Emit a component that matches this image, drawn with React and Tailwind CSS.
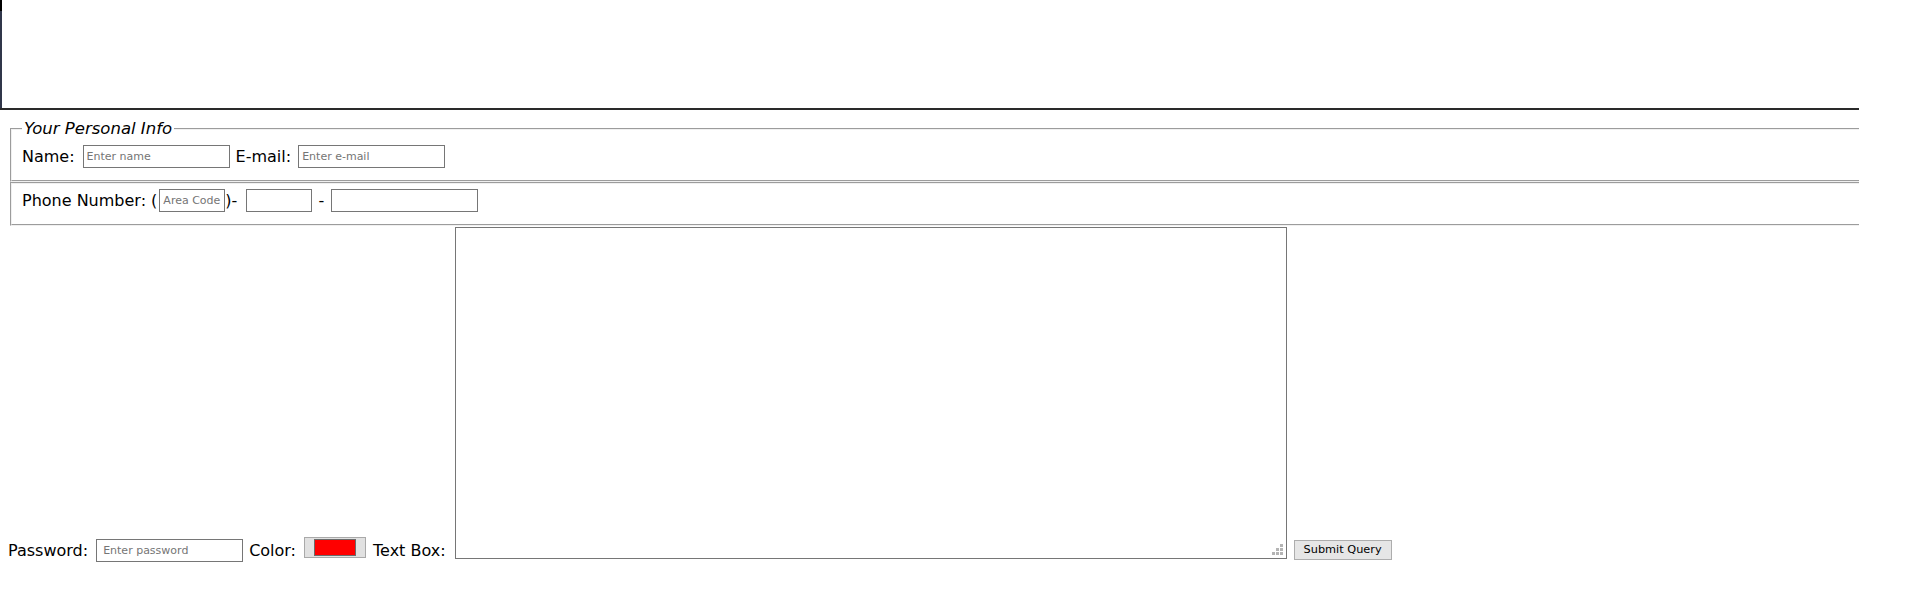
export default function App() {
  const inputBase =
    "h-[23px] border border-[#767676] bg-white px-[3px] text-[11px] text-black outline-none placeholder:text-[#757575] font-['DejaVu_Sans',sans-serif]";
  return (
    <div className="w-[1859px] h-[616px] overflow-hidden bg-white font-['DejaVu_Sans',sans-serif] text-black">
      <div className="flex h-[110px] w-full border-b-2 border-[#2a2a2a]">
        <div className="flex w-[2px] flex-col">
          <div className="h-[11px] bg-black" />
          <div className="flex-1 bg-[#30364a]" />
        </div>
      </div>

      <fieldset className="ml-[10px] mt-[9px] w-[1900px] border-2 border-[#f0f0f0] [border-style:groove] px-[10px] pt-[6px] pb-[12px]">
        <legend className="px-[2px] text-[16.5px] italic leading-[20px]">Your Personal Info</legend>
        <div className="flex h-[23px] items-center">
          <span className="text-[16px] leading-[19px]">Name:</span>
          <input className={`${inputBase} ml-[8px] w-[147px]`} placeholder="Enter name" />
          <span className="ml-[6px] text-[16px] leading-[19px]">E-mail:</span>
          <input className={`${inputBase} ml-[7px] w-[147px]`} placeholder="Enter e-mail" />
        </div>
      </fieldset>

      <fieldset className="ml-[10px] w-[1900px] border-2 border-[#f0f0f0] [border-style:groove] px-[10px] pt-[5px] pb-[12px]">
        <div className="flex h-[23px] items-center">
          <span className="whitespace-pre text-[16px] leading-[19px]">Phone Number: (</span>
          <input className={`${inputBase} ml-[2px] w-[66px]`} placeholder="Area Code" />
          <span className="text-[16px] leading-[19px]">)-</span>
          <input className={`${inputBase} ml-[9px] w-[66px]`} />
          <span className="ml-[6px] mr-[7px] text-[16px] leading-[19px]">-</span>
          <input className={`${inputBase} w-[147px]`} />
        </div>
      </fieldset>

      <div className="flex items-end pl-[8px] pt-[1px]">
        <span className="mb-[-1px] text-[16px] leading-[19px]">Password:</span>
        <input
          type="password"
          className={`${inputBase} mb-[-3px] ml-[8px] w-[147px] pl-[6px] text-[11.5px]`}
          placeholder="Enter password"
        />
        <span className="mb-[-1px] ml-[6px] text-[16px] leading-[19px]">Color:</span>
        <div className="mb-[1px] ml-[8px] flex h-[21px] w-[62px] items-center justify-center border border-[#a9a9a9] bg-[#e1e1e1]">
          <div className="h-[17px] w-[42px] border border-[#6b6b6b] bg-[#ff0000]" />
        </div>
        <span className="mb-[-1px] ml-[7px] text-[16px] leading-[19px]">Text Box:</span>
        <div className="relative ml-[9px] h-[332px] w-[832px]">
          <textarea className="block h-full w-full resize-none border border-[#767676] bg-white outline-none" />
          <svg
            className="absolute bottom-[4px] right-[4px]"
            width="11"
            height="11"
            viewBox="0 0 11 11"
          >
            <rect x="8" y="0" width="3" height="3" fill="#b4b4b4" />
            <rect x="4" y="4" width="3" height="3" fill="#b4b4b4" />
            <rect x="8" y="4" width="3" height="3" fill="#b4b4b4" />
            <rect x="0" y="8" width="3" height="3" fill="#b4b4b4" />
            <rect x="4" y="8" width="3" height="3" fill="#b4b4b4" />
            <rect x="8" y="8" width="3" height="3" fill="#b4b4b4" />
          </svg>
        </div>
        <button className="mb-[-1px] ml-[7px] h-[20px] w-[98px] border border-[#adadad] bg-[#e6e6e6] text-[11.3px] leading-[18px] text-black font-['DejaVu_Sans',sans-serif]">
          Submit Query
        </button>
      </div>
    </div>
  );
}
